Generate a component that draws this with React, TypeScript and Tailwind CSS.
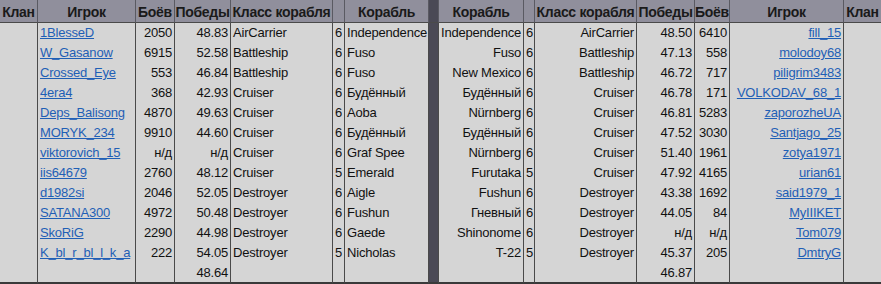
import React from "react";

type Align = "l" | "r" | "c";

const left: string[][] = [
  ["1BlesseD", "2050", "48.83", "AirCarrier", "6", "Independence"],
  ["W_Gasanow", "6915", "52.58", "Battleship", "6", "Fuso"],
  ["Crossed_Eye", "553", "46.84", "Battleship", "6", "Fuso"],
  ["4era4", "368", "42.93", "Cruiser", "6", "Будённый"],
  ["Deps_Balisong", "4870", "49.63", "Cruiser", "6", "Aoba"],
  ["MORYK_234", "9910", "44.60", "Cruiser", "6", "Будённый"],
  ["viktorovich_15", "н/д", "н/д", "Cruiser", "6", "Graf Spee"],
  ["iis64679", "2760", "48.12", "Cruiser", "5", "Emerald"],
  ["d1982si", "2046", "52.05", "Destroyer", "6", "Aigle"],
  ["SATANA300", "4972", "50.48", "Destroyer", "6", "Fushun"],
  ["SkoRiG", "2290", "44.98", "Destroyer", "6", "Gaede"],
  ["K_bl_r_bl_l_k_a", "222", "54.05", "Destroyer", "5", "Nicholas"],
];

const right: string[][] = [
  ["Independence", "6", "AirCarrier", "48.50", "6410", "fill_15"],
  ["Fuso", "6", "Battleship", "47.13", "558", "molodoy68"],
  ["New Mexico", "6", "Battleship", "46.72", "717", "piligrim3483"],
  ["Будённый", "6", "Cruiser", "46.78", "171", "VOLKODAV_68_1"],
  ["Nürnberg", "6", "Cruiser", "46.81", "5283", "zaporozheUA"],
  ["Будённый", "6", "Cruiser", "47.52", "3030", "Santjago_25"],
  ["Nürnberg", "6", "Cruiser", "51.40", "1961", "zotya1971"],
  ["Furutaka", "5", "Cruiser", "47.92", "4165", "urian61"],
  ["Fushun", "6", "Destroyer", "43.38", "1692", "said1979_1"],
  ["Гневный", "6", "Destroyer", "44.05", "84", "MyIIIKET"],
  ["Shinonome", "6", "Destroyer", "н/д", "н/д", "Tom079"],
  ["T-22", "5", "Destroyer", "45.37", "205", "DmtryG"],
];

const headers = [
  "Клан",
  "Игрок",
  "Боёв",
  "Победы",
  "Класс корабля",
  "",
  "Корабль",
  "",
  "Корабль",
  "",
  "Класс корабля",
  "Победы",
  "Боёв",
  "Игрок",
  "Клан",
];

function Cell({
  children,
  align = "l",
  last = false,
  bottom = false,
}: {
  children?: React.ReactNode;
  align?: Align;
  last?: boolean;
  bottom?: boolean;
}) {
  const a =
    align === "r" ? "justify-end text-right" : align === "c" ? "justify-center" : "justify-start";
  return (
    <div
      className={`flex items-center overflow-hidden whitespace-nowrap bg-[#d5d5d5] px-[2px] text-[13px] tracking-[-0.2px] text-[#111] ${a} ${
        last ? "" : "border-r border-[#4a4a4a]"
      } ${bottom ? "h-[21px] border-b-2 border-b-[#3a3a3a]" : "h-[20px]"}`}
    >
      {children}
    </div>
  );
}

function Divider({ bottom = false }: { bottom?: boolean }) {
  return (
    <div
      className={`bg-[#4a4955] border-r border-[#4a4a4a] ${
        bottom ? "h-[21px] border-b-2 border-b-[#3a3a3a]" : "h-[20px]"
      }`}
    />
  );
}

function Link({ children }: { children: React.ReactNode }) {
  return <span className="text-[#1f5fb6] underline decoration-[#1f5fb6]">{children}</span>;
}

export default function App() {
  return (
    <div
      className="w-[881px] h-[284px] overflow-hidden bg-[#d5d5d5]"
      style={{ fontFamily: '"Liberation Sans", Arial, sans-serif' }}
    >
      <div className="grid grid-cols-[38px_98px_39px_56px_102px_12px_84px_10px_85px_11px_102px_58px_35px_114px_37px]">
        {headers.map((h, i) => (
          <div
            key={"h" + i}
            className={`flex h-[23px] items-center justify-center overflow-hidden whitespace-nowrap border-b border-b-[#4a4a4a] pt-[2px] text-[14px] tracking-[-0.3px] font-bold text-[#1a1a1a] ${
              i === 7 ? "bg-[#4a4955]" : "bg-[#908f9c]"
            } ${i === 14 ? "" : "border-r border-r-[#5a5a62]"}`}
          >
            {h}
          </div>
        ))}
        {left.map((l, i) => {
          const r = right[i];
          return (
            <React.Fragment key={i}>
              <Cell />
              <Cell>
                <Link>{l[0]}</Link>
              </Cell>
              <Cell align="r">{l[1]}</Cell>
              <Cell align="r">{l[2]}</Cell>
              <Cell>{l[3]}</Cell>
              <Cell align="r">{l[4]}</Cell>
              <Cell>{l[5]}</Cell>
              <Divider />
              <Cell align="r">{r[0]}</Cell>
              <Cell>{r[1]}</Cell>
              <Cell align="r">{r[2]}</Cell>
              <Cell align="r">{r[3]}</Cell>
              <Cell align="r">{r[4]}</Cell>
              <Cell align="r">
                <Link>{r[5]}</Link>
              </Cell>
              <Cell last />
            </React.Fragment>
          );
        })}
        <Cell bottom />
        <Cell bottom />
        <Cell bottom />
        <Cell bottom align="r">
          48.64
        </Cell>
        <Cell bottom />
        <Cell bottom />
        <Cell bottom />
        <Divider bottom />
        <Cell bottom />
        <Cell bottom />
        <Cell bottom />
        <Cell bottom align="r">
          46.87
        </Cell>
        <Cell bottom />
        <Cell bottom />
        <Cell bottom last />
      </div>
    </div>
  );
}
